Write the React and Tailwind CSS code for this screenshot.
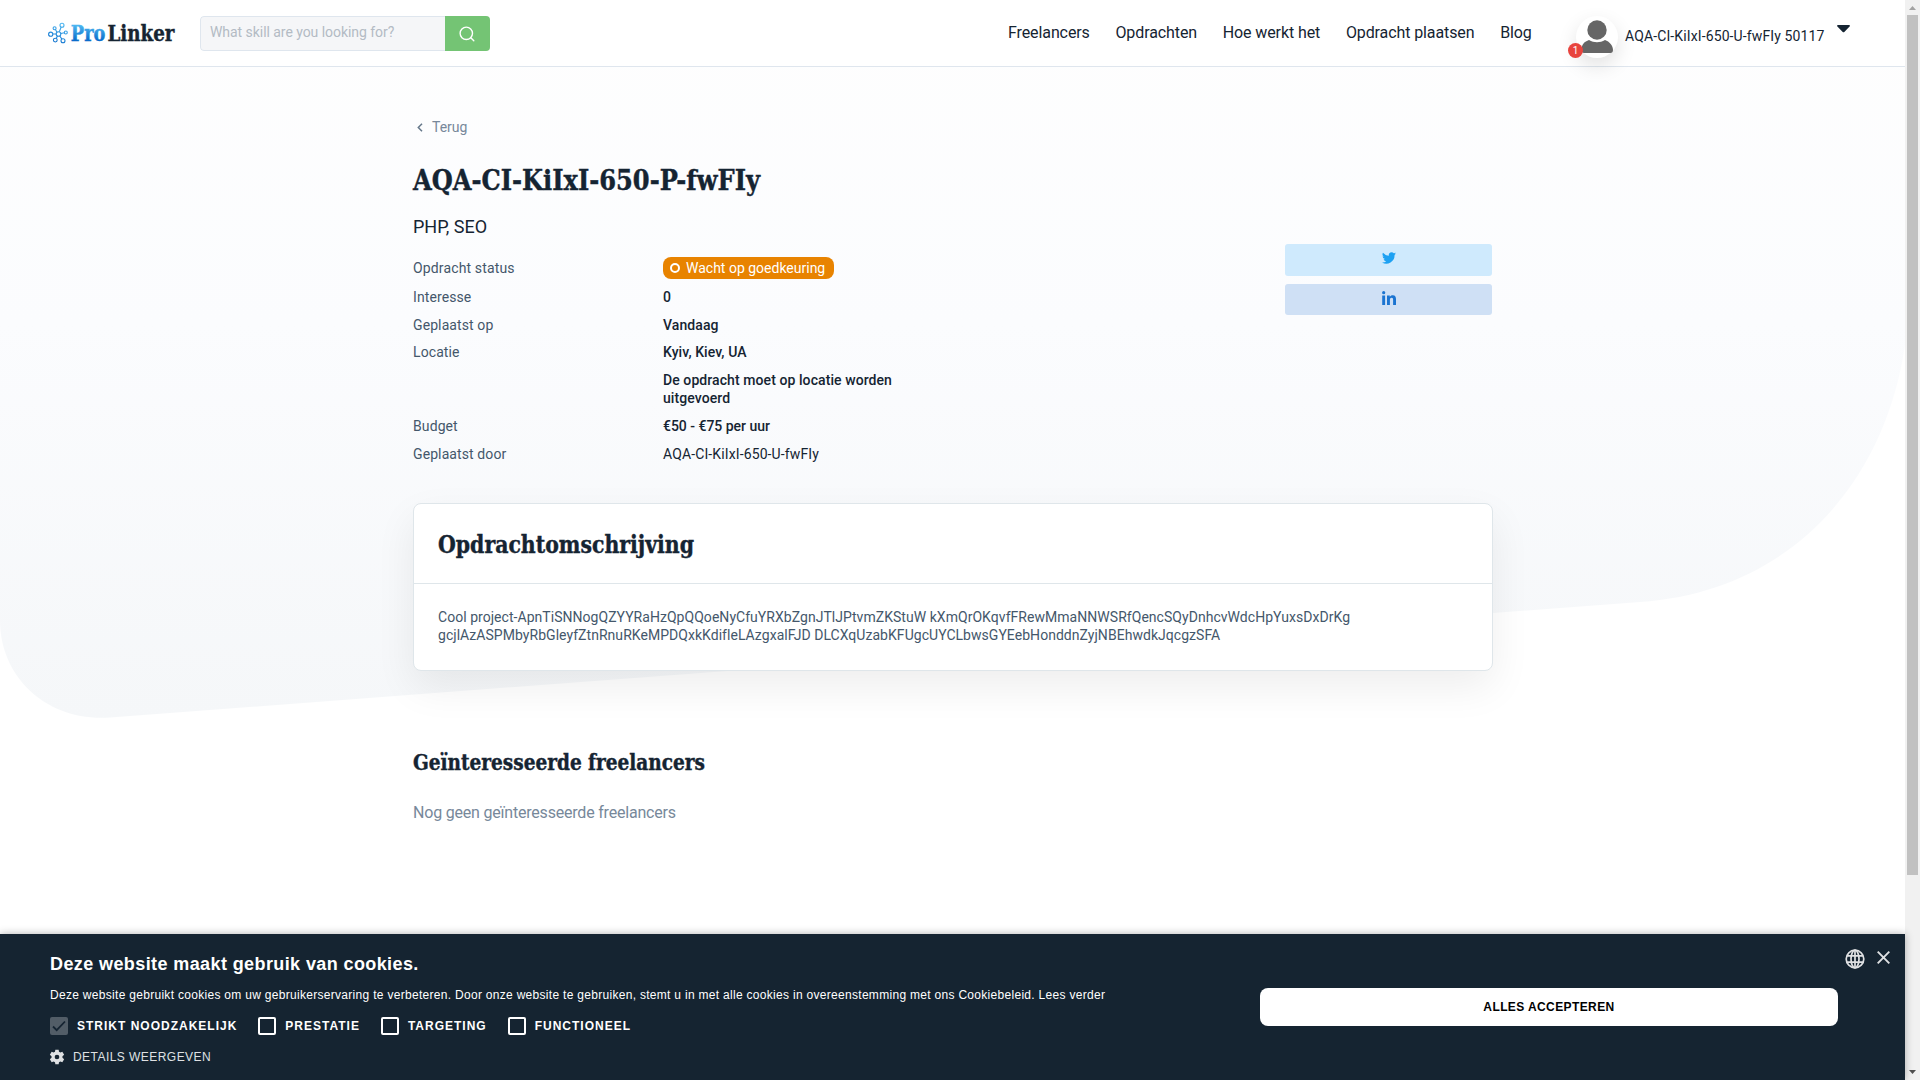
import React from "react";

const slab = "font-['Roboto_Slab','DejaVu_Serif_Condensed','DejaVu_Serif',serif] font-bold";

function Logo() {
  return (
    <svg width="128" height="24" viewBox="0 0 128 24" className="shrink-0 overflow-visible">
      <defs>
        <linearGradient id="pro" x1="0" y1="0" x2="0" y2="1">
          <stop offset="0.2" stopColor="#4bb5f0" />
          <stop offset="0.8" stopColor="#0a6ccb" />
        </linearGradient>
        <linearGradient id="net" gradientUnits="userSpaceOnUse" x1="14" y1="2" x2="6" y2="22">
          <stop offset="0" stopColor="#4bb5f0" />
          <stop offset="1" stopColor="#0a6ccb" />
        </linearGradient>
      </defs>
      <g fill="none" stroke="url(#net)" strokeWidth="1.1">
        <circle cx="10.5" cy="12" r="2.3" />
        <circle cx="14" cy="3.2" r="2" />
        <circle cx="6.6" cy="6.2" r="1.5" />
        <circle cx="2.7" cy="12.2" r="2.1" />
        <circle cx="7.3" cy="18.1" r="1.9" />
        <circle cx="15" cy="18.8" r="2" />
        <circle cx="17.8" cy="10.5" r="1.5" />
        <path d="M11.3 9.8 13.2 5M9 10.2 7.4 7.5M8.2 12H4.8M9.5 14.1 8.3 16.3M11.8 14 13.9 17.1M12.8 11.5l3.5-.7" />
      </g>
      <text x="22.8" y="18.500" textLength="34.500" lengthAdjust="spacingAndGlyphs" fontSize="21.500" className={slab} fill="url(#pro)" stroke="url(#pro)" strokeWidth="0.4">Pro</text>
      <text x="59.5" y="18.500" textLength="67" lengthAdjust="spacingAndGlyphs" fontSize="21.500" className={slab} fill="#152432" stroke="#152432" strokeWidth="0.4">Linker</text>
    </svg>
  );
}

function Header() {
  return (
    <header className="relative z-10 flex h-[67px] items-start border-b border-[#dfe6ee] bg-white pl-12">
      <a className="mt-[22px]"><Logo /></a>
      <div className="ml-6 mt-4 flex h-[35px] w-[290px] overflow-hidden rounded text-sm">
        <div className="flex flex-1 rounded-l border border-r-0 border-[#dfe6ee] bg-[#f5f6f8] pl-[9px] pt-[5px] tracking-[-0.05px] text-[#b3bbc4]">What skill are you looking for?</div>
        <button className="flex w-[45px] items-center justify-center bg-[#74c474] pr-[2px]">
          <svg width="16" height="16" viewBox="0 0 16 16" fill="none" stroke="#fff" strokeWidth="1.4" strokeLinecap="round"><circle cx="7.3" cy="7.3" r="6.2" /><path d="m11.8 11.8 3 3" /></svg>
        </button>
      </div>
      <nav className="ml-[518px] mt-[21px] flex w-[526px] shrink-0 gap-[25.700px] whitespace-nowrap text-base tracking-[-0.1px] text-[#152432]">
        <a>Freelancers</a><a>Opdrachten</a><a>Hoe werkt het</a><a>Opdracht plaatsen</a><a>Blog</a>
      </nav>
      <div className="relative ml-[42px] mt-4 h-[42px] w-[42px] shrink-0 rounded-full bg-white shadow-[0_8px_20px_rgba(0,0,0,0.12)]">
        <svg width="42" height="42" viewBox="0 0 42 42" fill="#666"><circle cx="21" cy="14" r="9.7" /><path d="M5.500 34c0-5.500 3-8.500 7.500-10 5 3 11 3 16 0 4.500 1.500 8 5.500 8 10 0 2-1 3-2.500 3H8c-1.500 0-2.500-1-2.500-3Z" /></svg>
        <span className="absolute -left-2 top-[27px] flex h-[15px] w-[15px] items-center justify-center rounded-full bg-[#e8443e] text-[10px] leading-none text-white">1</span>
      </div>
      <span className="ml-[7px] mt-[26px] w-[200px] whitespace-nowrap text-sm leading-5 tracking-[0.12px] text-[#152432]">AQA-CI-KiIxI-650-U-fwFIy 50117</span>
      <svg width="13" height="8" viewBox="0 0 13 8" className="ml-[12px] mt-[25px]" fill="#152432"><path d="M1 0h11c1 0 1.200 1 .6 1.600L7.300 6.900q-.8.800-1.600 0L.4 1.600C-.2 1 0 0 1 0Z" /></svg>
    </header>
  );
}

function Row({ label, children, className = "" }) {
  return (
    <div className={`flex text-sm leading-[18px] ${className}`}>
      <dt className="w-[250px] tracking-[0.1px] text-[#44576b]">{label}</dt>
      <dd className="w-[240px] font-medium tracking-[0.08px] text-[#152432]">{children}</dd>
    </div>
  );
}

function CheckItem({ label, checked }) {
  return (
    <label className="flex items-center gap-[9px] text-xs font-bold tracking-[1px]">
      {checked ? (
        <span className="flex h-[18px] w-[18px] items-center justify-center rounded-[2px] bg-[#525d67]">
          <svg width="14" height="12" viewBox="0 0 14 12" fill="none" stroke="#152432" strokeWidth="1.800"><path d="m1 6.500 3.700 3.700L13 1.500" /></svg>
        </span>
      ) : <span className="h-[18px] w-[18px] rounded-[2px] border-2 border-white" />}
      {label}
    </label>
  );
}

function CookieBar() {
  return (
    <section className="absolute bottom-0 left-0 flex h-[146px] w-[1905px] bg-[#152431] pl-[50px] font-['Liberation_Sans',Arial,sans-serif] text-white shadow-[0_0_8px_rgba(0,0,0,0.3)]">
      <div className="w-[1210px] whitespace-nowrap">
        <h2 className="mt-[18px] text-lg font-bold leading-6 tracking-[0.4px]">Deze website maakt gebruik van cookies.</h2>
        <p className="mt-[11px] text-xs leading-4 tracking-[0.297px]">Deze website gebruikt cookies om uw gebruikerservaring te verbeteren. Door onze website te gebruiken, stemt u in met alle cookies in overeenstemming met ons Cookiebeleid. Lees verder</p>
        <div className="mt-[14px] flex gap-[21px]">
          <CheckItem label="STRIKT NOODZAKELIJK" checked />
          <CheckItem label="PRESTATIE" /><CheckItem label="TARGETING" /><CheckItem label="FUNCTIONEEL" />
        </div>
        <div className="mt-[14px] flex items-center gap-2 text-xs tracking-[0.45px] text-[#dfe1e3]">
          <svg width="16" height="16" viewBox="0 0 24 24" className="-ml-px" fill="#dfe1e3"><path fillRule="evenodd" d="m9.500 1-.5 3.200-2 1.200-3-1.200-2.700 4.500 2.500 2v2.600l-2.500 2L4 19.800l3-1.200 2 1.200.5 3.200h5l.5-3.200 2-1.200 3 1.200 2.700-4.500-2.500-2v-2.600l2.500-2L20 4.200l-3 1.200-2-1.200-.5-3.200ZM12 8.500a3.500 3.500 0 1 1 0 7 3.500 3.500 0 0 1 0-7Z" /></svg>
          DETAILS WEERGEVEN
        </div>
      </div>
      <button className="mt-[54px] h-[38px] w-[578px] rounded-lg bg-white text-xs font-bold tracking-[0.4px] text-black">ALLES ACCEPTEREN</button>
      <svg width="20" height="20" viewBox="0 0 20 20" className="ml-[7px] mt-[15px]" fill="none" stroke="#dfe1e3" strokeWidth="1.700"><circle cx="10" cy="10" r="8.800" /><ellipse cx="10" cy="10" rx="4" ry="8.800" /><path d="M10 1v18M2 6.800h16M2 13.200h16" /></svg>
      <svg width="13" height="13" viewBox="0 0 13 13" className="ml-[12px] mt-[17px]" stroke="#dfe1e3" strokeWidth="1.900"><path d="m.7.700 11.600 11.600M12.300.7.700 12.300" /></svg>
    </section>
  );
}

export default function App() {
  return (
    <div className="relative flex h-[1080px] w-[1920px] overflow-hidden bg-white font-['Roboto',sans-serif]">
      <div className="relative w-[1905px]">
        <svg className="absolute left-0 top-0" width="1905" height="740" viewBox="0 0 1905 740">
          <defs>
            <linearGradient id="bg" x1="0" y1="0" x2="0" y2="1"><stop offset="0" stopColor="#fefefe" /><stop offset=".45" stopColor="#fbfcfe" /><stop offset="1" stopColor="#f5f7f9" /></linearGradient>
          </defs>
          <path fill="url(#bg)" d="M0 0H1905V345C1885 483 1790 592 1640 602L110 717.500C50 722 0 680 0 620Z" />
        </svg>
        <Header />
        <main className="relative ml-[413px] w-[1079px]">
          <a className="flex items-center pt-[50px] text-sm leading-5 text-[#77889a]">
            <svg width="6" height="9" viewBox="0 0 6 9" className="ml-[4px] mr-[9px] mt-px" fill="none" stroke="#66788a" strokeWidth="1.500"><path d="M5 .7 1.300 4.500 5 8.300" /></svg>Terug
          </a>
          <h1 className="mt-[22px] h-[42px]">
            <svg width="350" height="42" className="overflow-visible"><text x="0" y="31" fontSize="28" textLength="347" lengthAdjust="spacingAndGlyphs" className={slab} fill="#152432" stroke="#152432" strokeWidth="0.4">AQA-CI-KiIxI-650-P-fwFIy</text></svg>
          </h1>
          <p className="mt-[14px] text-lg leading-6 text-[#152432]">PHP, SEO</p>
          <div className="flex justify-between">
            <dl>
              <div className="mt-[18px] flex text-sm leading-[22px]">
                <dt className="w-[250px] tracking-[0.14px] text-[#44576b]">Opdracht status</dt>
                <dd className="flex h-[22px] w-[171px] items-center rounded-lg bg-[#e88300] pl-[7px] text-white">
                  <span className="mr-[6px] h-[10px] w-[10px] rounded-full border-2 border-white" />Wacht op goedkeuring
                </dd>
              </div>
              <Row label="Interesse" className="mt-[9px]">0</Row>
              <Row label="Geplaatst op" className="mt-[10px]">Vandaag</Row>
              <Row label="Locatie" className="mt-[9px]">Kyiv, Kiev, UA</Row>
              <Row label="" className="mt-[10px]">De opdracht moet op locatie worden uitgevoerd</Row>
              <Row label="Budget" className="mt-[10px]"><span className="tracking-[-0.02px]">€50 - €75 per uur</span></Row>
              <Row label="Geplaatst door" className="mt-[10px]"><span className="font-normal tracking-[0.12px]">AQA-CI-KiIxI-650-U-fwFIy</span></Row>
            </dl>
            <div className="mt-[5px] flex w-[207px] flex-col gap-2">
              <a className="flex h-8 items-center justify-center rounded-[3px] bg-[#cfeafd] pb-1">
                <svg width="14" height="12" viewBox="0 0 24 20" fill="#1da1f2"><path d="M24 2.400a10 10 0 0 1-2.800.8A5 5 0 0 0 23.300.5a10 10 0 0 1-3.100 1.200 4.900 4.900 0 0 0-8.400 4.500A14 14 0 0 1 1.700 1a4.900 4.900 0 0 0 1.500 6.600 5 5 0 0 1-2.200-.6 4.900 4.900 0 0 0 4 4.900 5 5 0 0 1-2.300.1 4.900 4.900 0 0 0 4.600 3.400A9.900 9.900 0 0 1 0 17.500 14 14 0 0 0 21.500 5Z" /></svg>
              </a>
              <a className="flex h-[31px] items-center justify-center rounded-[3px] bg-[#cfe0f5] pb-[3px]">
                <svg width="14" height="14" viewBox="0 0 14 14" fill="#1b74d1"><circle cx="1.700" cy="1.700" r="1.600" /><path d="M.2 4.600h2.900V14H.2ZM5 4.600h2.800v1.300c.5-.9 1.500-1.600 3-1.600C13.400 4.300 14 6 14 8.300V14h-2.900V9c0-1.300 0-2.300-1.500-2.300S7.900 7.800 7.900 9v5H5Z" /></svg>
              </a>
            </div>
          </div>
          <section className="mt-10 h-[168px] w-[1080px] rounded-lg border border-[#dfe6ea] bg-white shadow-[0_16px_40px_rgba(0,0,0,0.07)]">
            <h2 className="h-20 border-b border-[#dfe6ea] pl-6 pt-[24px]">
              <svg width="260" height="36" className="overflow-visible"><text x="0" y="24.500" fontSize="25" textLength="256" lengthAdjust="spacingAndGlyphs" className={slab} fill="#152432" stroke="#152432" strokeWidth="0.4">Opdrachtomschrijving</text></svg>
            </h2>
            <p className="px-6 pt-6 text-sm leading-[18px] tracking-[0.04px] text-[#44576b]">Cool project-ApnTiSNNogQZYYRaHzQpQQoeNyCfuYRXbZgnJTlJPtvmZKStuW kXmQrOKqvfFRewMmaNNWSRfQencSQyDnhcvWdcHpYuxsDxDrKg gcjlAzASPMbyRbGleyfZtnRnuRKeMPDQxkKdifleLAzgxalFJD DLCXqUzabKFUgcUYCLbwsGYEebHonddnZyjNBEhwdkJqcgzSFA</p>
          </section>
          <h2 className="mt-[75px] h-8">
            <svg width="300" height="32" className="overflow-visible"><text x="0" y="24" fontSize="22" textLength="292" lengthAdjust="spacingAndGlyphs" className={slab} fill="#152432" stroke="#152432" strokeWidth="0.4">Geïnteresseerde freelancers</text></svg>
          </h2>
          <p className="mt-[23px] text-base leading-6 tracking-[-0.2px] text-[#77889a]">Nog geen geïnteresseerde freelancers</p>
        </main>
        <CookieBar />
      </div>
      <aside className="flex w-[15px] flex-col items-center bg-[#f1f1f1]">
        <svg width="7" height="4" className="mt-[6px]" viewBox="0 0 7 4" fill="#a3a3a3"><path d="M0 4 3.500 0 7 4Z" /></svg>
        <span className="mt-[5px] h-[860px] w-[11px] bg-[#c1c1c1]" />
        <svg width="7" height="4" className="mb-[6px] mt-auto" viewBox="0 0 7 4" fill="#505050"><path d="M0 0 3.500 4 7 0Z" /></svg>
      </aside>
    </div>
  );
}
